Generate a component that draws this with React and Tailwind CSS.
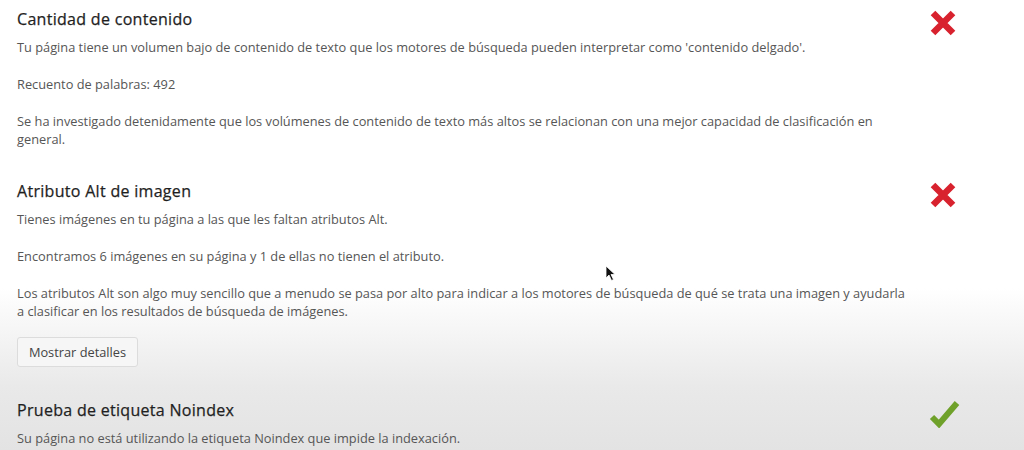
import React from "react";

function Fail() {
  return (
    <svg width="28" height="28" viewBox="0 0 28 28" className="block">
      <path d="M4 4 L24 24 M24 4 L4 24" stroke="#d8222e" strokeWidth="6.5" strokeLinecap="butt" />
    </svg>
  );
}

function Pass() {
  return (
    <svg width="32" height="28" viewBox="0 0 32 28" className="block">
      <path d="M3 17 L10 24 L28 3" stroke="#6fa12a" strokeWidth="6" fill="none" strokeLinejoin="miter" />
    </svg>
  );
}

function Section({ title, ok, children }) {
  return (
    <div className="flex">
      <div className="w-[895px]">
        <h2 className="text-[16px] leading-[22px] text-[#1f1f1f] tracking-[0.3px] mb-[8px] [-webkit-text-stroke:0.25px_#1f1f1f]">{title}</h2>
        <div className="flex flex-col gap-[19px] text-[12.8px] leading-[18px] text-[#565656]">
          {children}
        </div>
      </div>
      <div className="ml-[17px] mt-[1px]">{ok ? <Pass /> : <Fail />}</div>
    </div>
  );
}

export default function App() {
  return (
    <div className="relative w-[1024px] h-[450px] overflow-hidden bg-[linear-gradient(to_bottom,#ffffff_0%,#ffffff_64%,#e9e9e9_86%,#e3e3e3_100%)] font-['Open_Sans',sans-serif]">
      <div className="pl-[17px] pt-[8px] flex flex-col gap-[32px]">
        <Section title="Cantidad de contenido">
          <p>Tu página tiene un volumen bajo de contenido de texto que los motores de búsqueda pueden interpretar como 'contenido delgado'.</p>
          <p>Recuento de palabras: 492</p>
          <p className="whitespace-nowrap">
            Se ha investigado detenidamente que los volúmenes de contenido de texto más altos se relacionan con una mejor capacidad de clasificación en
            <br />
            general.
          </p>
        </Section>

        <Section title="Atributo Alt de imagen">
          <p>Tienes imágenes en tu página a las que les faltan atributos Alt.</p>
          <p>Encontramos 6 imágenes en su página y 1 de ellas no tienen el atributo.</p>
          <p className="whitespace-nowrap">
            Los atributos Alt son algo muy sencillo que a menudo se pasa por alto para indicar a los motores de búsqueda de qué se trata una imagen y ayudarla
            <br />
            a clasificar en los resultados de búsqueda de imágenes.
          </p>
          <div className="-mt-[2px]">
            <button className="h-[30px] w-[121px] border border-[#dcdcdc] rounded-[3px] bg-[#f6f6f6] text-[12.8px] text-[#444444]">
              Mostrar detalles
            </button>
          </div>
        </Section>

        <Section title="Prueba de etiqueta Noindex" ok>
          <p>Su página no está utilizando la etiqueta Noindex que impide la indexación.</p>
        </Section>
      </div>

      <svg width="12" height="17" viewBox="0 0 12 17" className="absolute left-[605px] top-[265px]">
        <path d="M1 1 L1 13 L4 10 L6.5 15.5 L8.5 14.5 L6 9.5 L10 9.5 Z" fill="#111" stroke="#fff" strokeWidth="0.8" />
      </svg>
    </div>
  );
}
